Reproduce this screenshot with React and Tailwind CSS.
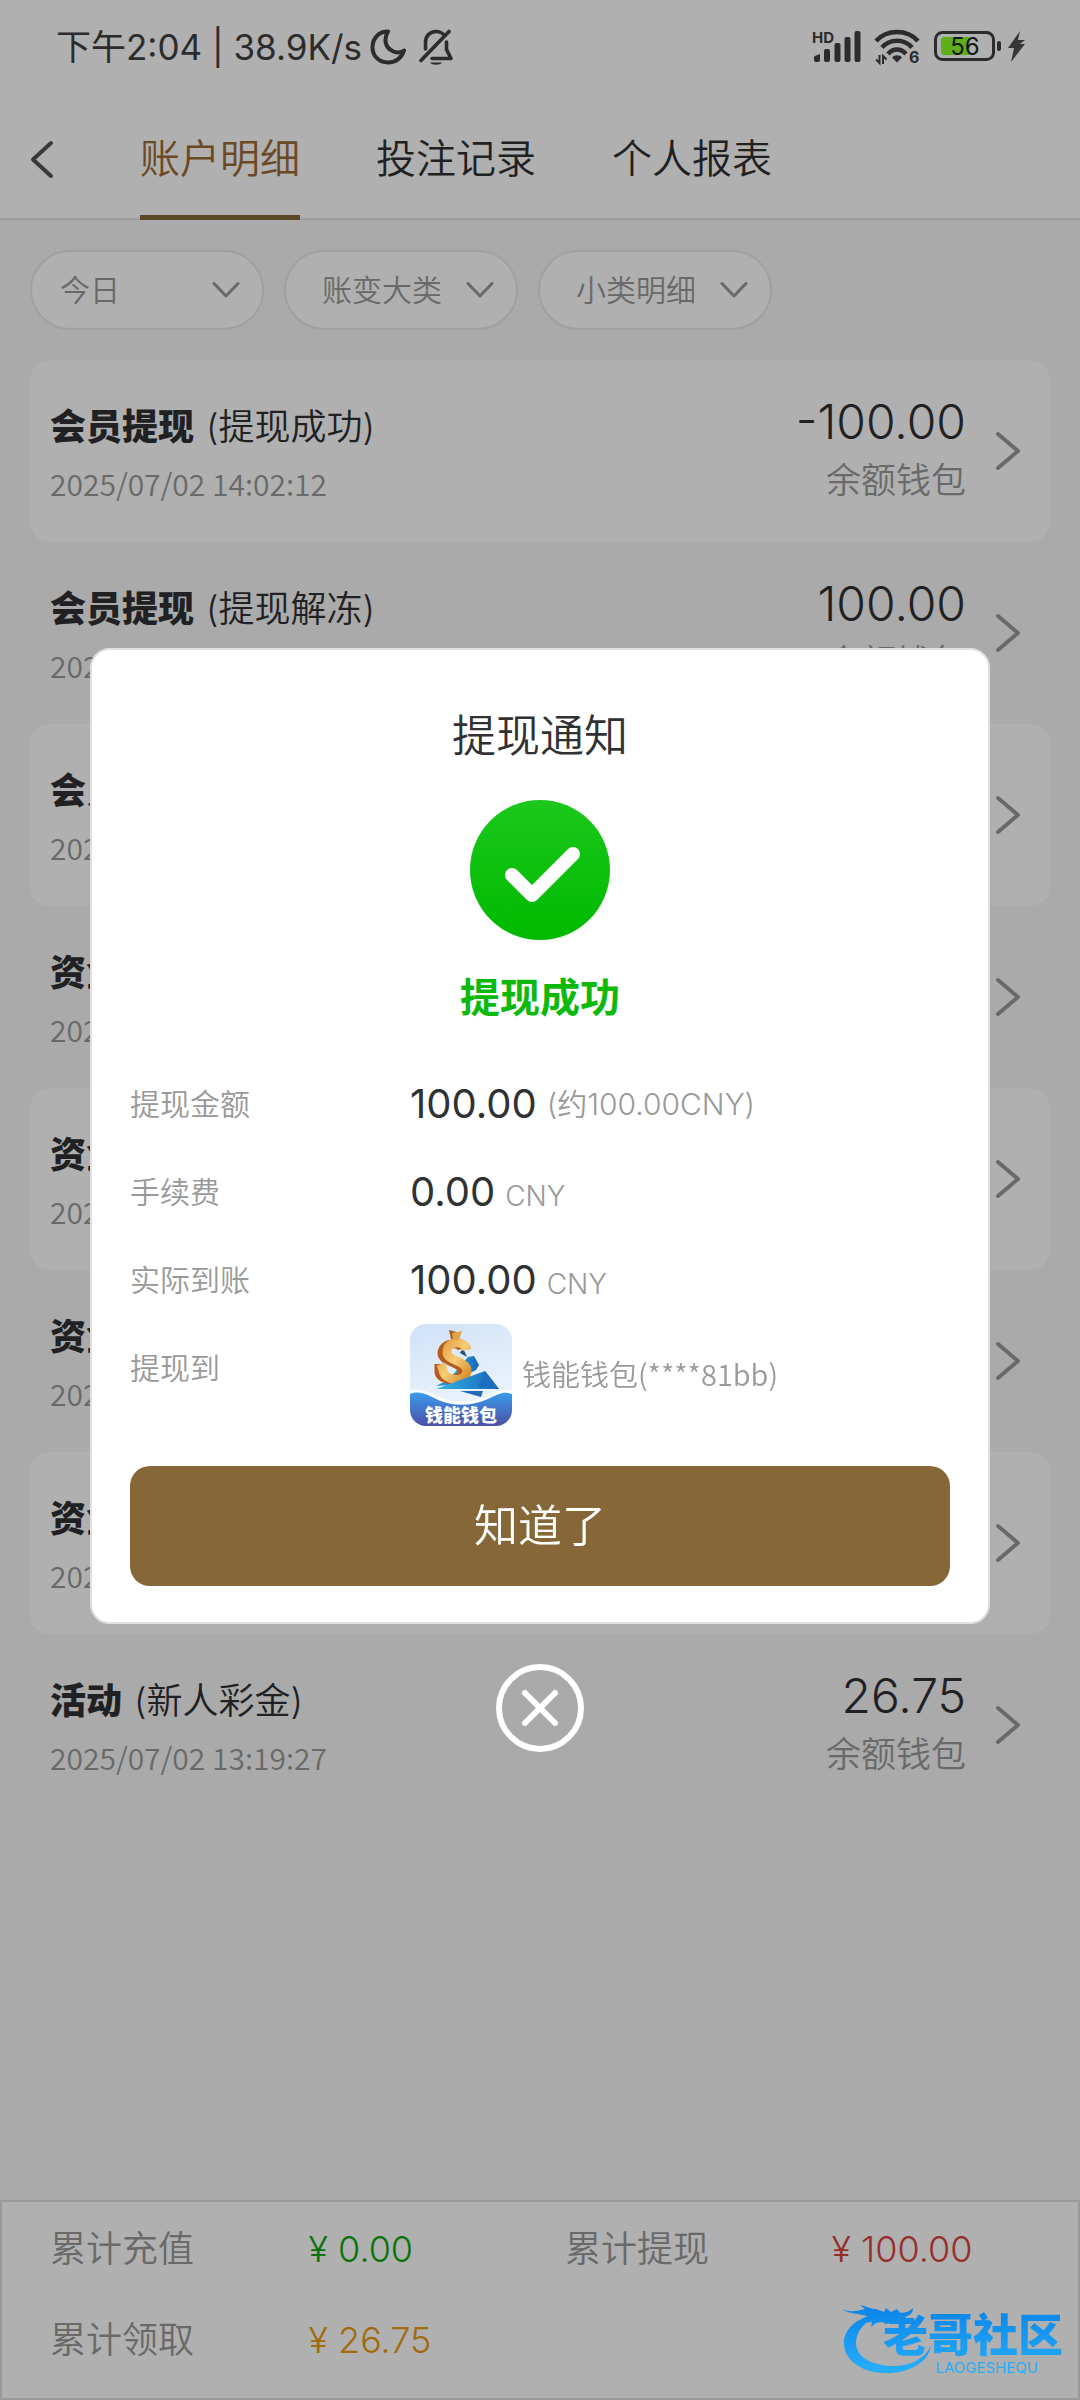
import React from "react";

const tabs = ["账户明细", "投注记录", "个人报表"];

const records = [
  { title: "会员提现", note: "(提现成功)", time: "2025/07/02 14:02:12", amount: "-100.00" },
  { title: "会员提现", note: "(提现解冻)", time: "2025/07/02 14:02:12", amount: "100.00" },
  { title: "会员提现", note: "(提现冻结)", time: "2025/07/02 13:58:40", amount: "-100.00" },
  { title: "资金转换", note: "(转入)", time: "2025/07/02 13:57:21", amount: "100.00" },
  { title: "资金转换", note: "(转出)", time: "2025/07/02 13:57:20", amount: "-100.00" },
  { title: "资金转换", note: "(转入)", time: "2025/07/02 13:20:11", amount: "26.75" },
  { title: "资金转换", note: "(转出)", time: "2025/07/02 13:20:10", amount: "-26.75" },
  { title: "活动", note: "(新人彩金)", time: "2025/07/02 13:19:27", amount: "26.75" },
];

function StatusBar() {
  return (
    <div className="flex h-[94px] items-center justify-between bg-white pl-14 pr-[50px] text-[#404040]">
      <div className="flex items-center">
        <span className="text-[35px] font-normal leading-[48px]">下午2:04 | 38.9K/s</span>
        <svg className="ml-2 h-9 w-9" viewBox="0 0 36 36" fill="none" stroke="currentColor" strokeWidth="4" strokeLinejoin="round" aria-hidden="true">
          <path d="M18 2.500C8 2.500 2.500 10 2.500 18.500C2.500 27 9 33.500 18 33.500C26 33.500 32 28.500 34 21.500C31 24 26 24 22.500 22C15 18.500 13.500 10 18 2.500Z" />
        </svg>
        <svg className="ml-3 h-9 w-9" viewBox="0 0 36 36" fill="none" stroke="currentColor" strokeWidth="3.6" strokeLinecap="round" strokeLinejoin="round" aria-hidden="true">
          <path d="M7.500 20V13.500C7.500 7 12 2.500 18 2.500C21.500 2.500 24.500 4 26.500 6.500" />
          <path d="M31 2.500L3 31.500" />
          <path d="M28.500 13V20.500L33 29.500H14" />
          <path d="M12 33.500H24C22 36.500 14 36.500 12 33.500Z" fill="currentColor" stroke="none" />
        </svg>
      </div>
      <div className="flex items-center">
        <svg className="h-9 w-[50px]" viewBox="0 0 50 36" fill="currentColor" aria-hidden="true">
          <text x="0" y="14" fontSize="15" fontWeight="700" fontFamily="Inter, sans-serif">HD</text>
          <path d="M2 28Q2 27 8 25V31Q8 33 6 33H4Q2 33 2 31Z" />
          <rect x="12" y="20" width="6" height="13" rx="2" />
          <rect x="22.500" y="14" width="6" height="19" rx="2" />
          <rect x="32.500" y="8" width="6" height="25" rx="2" />
          <rect x="42.500" y="2" width="6" height="31" rx="2" />
        </svg>
        <svg className="ml-3 h-9 w-12 overflow-visible" viewBox="0 0 48 36" fill="none" stroke="currentColor" strokeWidth="4.500" aria-hidden="true">
          <path d="M2 12C13 0 33 0 44 12" />
          <path d="M8 18.500C16 9.500 30 9.500 38 18.500" />
          <path d="M14 25C19 19 27 19 32 25" />
          <path d="M18 28.500C20.500 25.500 25.500 25.500 28 28.500L23 33.500Z" fill="currentColor" stroke="none" />
          <path d="M5.500 26V34L2 30.500M9 35V27L12.500 30.500" strokeWidth="2" />
          <text x="35" y="34" fontSize="16" fontWeight="700" fill="currentColor" stroke="none" fontFamily="Inter, sans-serif">6</text>
        </svg>
        <svg className="ml-3 h-9 w-24" viewBox="0 0 96 36" aria-hidden="true">
          <rect x="1.500" y="3.500" width="58" height="27" rx="7" fill="none" stroke="#404040" strokeWidth="3" />
          <path d="M10 8H36V26H10Q7 26 7 23V11Q7 8 10 8Z" fill="#88ff28" />
          <text x="31" y="26" textAnchor="middle" fontSize="24" fontWeight="400" fill="#222222" fontFamily="Inter, sans-serif">56</text>
          <rect x="63" y="12" width="4" height="10" rx="2" fill="#404040" />
          <path d="M86 2L74 19H80L77 33L91 15H86L91 11H84Z" fill="#505050" />
        </svg>
      </div>
    </div>
  );
}

function Header() {
  return (
    <header className="flex h-[126px] items-stretch border-b-2 border-[#e5e5e5] bg-white">
      <button type="button" aria-label="返回" className="flex w-[140px] items-center pl-[30px] pt-1.5">
        <svg className="h-10 w-6" viewBox="0 0 24 40" fill="none" stroke="#555555" strokeWidth="4" strokeLinecap="round" strokeLinejoin="round" aria-hidden="true">
          <path d="M21 4L3 20.500L21 37" />
        </svg>
      </button>
      <nav className="flex gap-[76px]">
        {tabs.map((tab, i) => (
          <a
            key={tab}
            href="#"
            className={
              i === 0
                ? "-mb-0.5 flex items-center border-b-[5px] border-[#866838] pt-2 text-[40px] leading-[60px] text-[#9b6a35]"
                : "flex items-center pt-1.5 text-[40px] leading-[60px] text-[#303133]"
            }
          >
            {tab}
          </a>
        ))}
      </nav>
    </header>
  );
}

function Filter({ label, indent }) {
  return (
    <div className="relative w-[234px]">
      <select
        aria-label={label}
        className={
          indent
            ? "h-20 w-full appearance-none rounded-full border-2 border-[#e8e8e8] bg-white pl-9 pr-14 text-[30px] leading-[44px] text-[#999999]"
            : "h-20 w-full appearance-none rounded-full border-2 border-[#e8e8e8] bg-white pl-7 pr-14 text-[30px] leading-[44px] text-[#999999]"
        }
      >
        <option>{label}</option>
      </select>
      <svg className="pointer-events-none absolute right-6 top-8 h-4 w-7" viewBox="0 0 28 16" fill="none" stroke="#999999" strokeWidth="3" strokeLinecap="round" strokeLinejoin="round" aria-hidden="true">
        <path d="M2 1.500L14 14L26 1.500" />
      </svg>
    </div>
  );
}

function RecordRow({ record }) {
  return (
    <li className="rounded-[20px] odd:bg-white">
      <button type="button" className="flex h-[182px] w-full items-center justify-between pl-5 pr-7 text-left">
        <span className="flex flex-col pt-1">
          <span className="flex gap-3 text-[36px] leading-[60px] text-[#303133]">
            <b className="font-black">{record.title}</b>
            <span>{record.note}</span>
          </span>
          <span className="text-[30px] leading-[52px] text-[#999999] font-['Noto_Sans_CJK_SC',sans-serif]">{record.time}</span>
        </span>
        <span className="flex items-center gap-7">
          <span className="flex flex-col pb-0.5 text-right">
            <span className="text-[48px] leading-[60px] text-[#303133]">{record.amount}</span>
            <span className="text-[35px] leading-[56px] text-[#999999]">余额钱包</span>
          </span>
          <svg className="h-10 w-7" viewBox="0 0 28 40" fill="none" stroke="#999999" strokeWidth="4" strokeLinecap="round" strokeLinejoin="round" aria-hidden="true">
            <path d="M4 3L24 20L4 37" />
          </svg>
        </span>
      </button>
    </li>
  );
}

function Summary() {
  return (
    <footer className="relative mt-auto h-[200px] border-2 border-[#e0e0e0] bg-white pl-12 pt-0.5">
      <dl className="grid grid-cols-[259fr_257fr_267fr_247fr] text-[36px] leading-[91px] text-[#999999]">
        <dt>累计充值</dt>
        <dd className="text-[#0ea80e]">¥ 0.00</dd>
        <dt>累计提现</dt>
        <dd className="text-[#d9453c]">¥ 100.00</dd>
        <dt>累计领取</dt>
        <dd className="text-[#e89c10]">¥ 26.75</dd>
      </dl>
    </footer>
  );
}

function CommunityMark() {
  return (
    <svg className="absolute bottom-5 right-3 h-20 w-[228px]" viewBox="0 0 228 80" role="img" aria-label="老哥社区">
      <defs>
        <linearGradient id="mark" gradientUnits="userSpaceOnUse" x1="0" y1="6" x2="0" y2="74">
          <stop offset="0" stopColor="#0a84e8" />
          <stop offset="1" stopColor="#27b0fb" />
        </linearGradient>
      </defs>
      <g fill="url(#mark)">
        <path d="M36 14C16 18 3 30 4 44C5 64 28 75 52 73C72 71 88 62 91 46C84 60 68 67 50 66C30 65 16 56 16 43C16 33 22 24 34 18Z" />
        <path d="M2 9C10 13 18 11 25 9L20 5C28 7 32 9 36 9L44 12L46 8L51 12L57 9L60 13C66 13 70 11 73 8C73 14 68 17 62 17L71 19C70 22 66 22 60 20L52 22L46 24L42 22L36 23L31 27L32 22L24 23L29 17C22 13 10 15 2 9Z" />
        <text x="43" y="52" fontSize="45" fontWeight="900" fontFamily="'Noto Sans CJK SC', sans-serif">老哥社区</text>
        <text x="96" y="73" fontSize="15" fontWeight="400" fontFamily="Inter, sans-serif">LAOGESHEQU</text>
      </g>
    </svg>
  );
}

function WalletLogo() {
  return (
    <svg className="h-[102px] w-[102px] shrink-0 rounded-2xl" viewBox="0 0 102 102" role="img" aria-label="钱能钱包">
      <defs>
        <linearGradient id="sky" x1="0" y1="0" x2="0.3" y2="1">
          <stop offset="0" stopColor="#cfe2f8" />
          <stop offset="1" stopColor="#f0f6fd" />
        </linearGradient>
        <linearGradient id="wave" x1="0" y1="0" x2="0" y2="1">
          <stop offset="0" stopColor="#399bec" />
          <stop offset="1" stopColor="#4c50a6" />
        </linearGradient>
        <linearGradient id="gold" x1="0" y1="0" x2="1" y2="1">
          <stop offset="0" stopColor="#e39a3c" />
          <stop offset="0.5" stopColor="#f7cd78" />
          <stop offset="1" stopColor="#d58b2c" />
        </linearGradient>
        <linearGradient id="plane" x1="0" y1="0" x2="1" y2="0">
          <stop offset="0" stopColor="#35b4e6" />
          <stop offset="1" stopColor="#1765b8" />
        </linearGradient>
      </defs>
      <rect width="102" height="102" fill="url(#sky)" />
      <path d="M58 33L64 32L69 41L66 46L56 51L40 54Z" fill="url(#plane)" />
      <path d="M26 62L40 55L54 50L54 60Z" fill="#2b8fd3" />
      <path d="M53 24L57 33L50 29Z" fill="#1e4f86" />
      <g fill="none" strokeLinecap="butt">
        <path d="M52 25C50 17 33 18 32 29C32 39 52 37 52 47C52 58 31 58 29 48V40" stroke="#b45a1c" strokeWidth="9" />
        <path d="M57 26C55 16 37 16 37 28C37 38 57 36 57 47C56 59 35 58 33 46L31 40" stroke="url(#gold)" strokeWidth="9" />
      </g>
      <path d="M39 6L50 9L49 15L41 15Z" fill="#a85b1c" />
      <path d="M42 9L52 7L49 16L43 16Z" fill="#e2a34a" />
      <path d="M26 65L75 47L89 65Z" fill="url(#plane)" />
      <path d="M75 47L89 65L68 63Z" fill="#1c6fc0" />
      <path d="M50 67L73 67L71 73Z" fill="#2469b4" />
      <path d="M0 67C10 63 18 68 28 73C44 80 62 79 78 72C88 67 94 64 102 67V102H0Z" fill="#ffffff" opacity="0.8" />
      <path d="M0 70C10 66 18 71 28 76C44 83 62 82 78 75C88 70 94 67 102 70V102H0Z" fill="url(#wave)" />
      <text x="51" y="98" textAnchor="middle" fontSize="18" fontWeight="900" fill="#ffffff" fontFamily="'Noto Sans CJK SC', sans-serif">钱能钱包</text>
    </svg>
  );
}

function DetailRow({ label, children }) {
  return (
    <div className="flex">
      <dt className="w-[280px] text-[30px] leading-[88px]">{label}</dt>
      <dd className="flex-1">{children}</dd>
    </div>
  );
}

function Notice() {
  return (
    <div className="fixed inset-0 flex flex-col items-center justify-center bg-black/31">
      <section role="dialog" aria-modal="true" aria-labelledby="notice-title" className="flex w-5/6 flex-col items-center rounded-[20px] border-2 border-[#e0e0e0] bg-white px-[38px] pb-9 pt-[53px]">
        <h2 id="notice-title" className="text-[44px] leading-[66px] text-[#303133]">提现通知</h2>
        <svg className="mt-[31px] h-[140px] w-[140px]" viewBox="0 0 140 140" aria-hidden="true">
          <defs>
            <linearGradient id="ok" x1="0" y1="0" x2="0" y2="1">
              <stop offset="0" stopColor="#1bc81b" />
              <stop offset="1" stopColor="#00b900" />
            </linearGradient>
          </defs>
          <circle cx="70" cy="70" r="70" fill="url(#ok)" />
          <path d="M42 75L62 95L103 54" fill="none" stroke="#ffffff" strokeWidth="14" strokeLinecap="round" strokeLinejoin="round" />
        </svg>
        <p className="mt-7 text-[40px] font-bold leading-[60px] text-[#0cb90c]">提现成功</p>
        <dl className="mt-8 w-full text-[#999999]">
          <DetailRow label="提现金额">
            <div className="flex h-[88px] items-center gap-2.5 leading-[88px]">
              <span className="text-[40px] font-normal text-[#303133]">100.00</span>
              <span className="text-[30px]">(约100.00CNY)</span>
            </div>
          </DetailRow>
          <DetailRow label="手续费">
            <div className="flex h-[88px] items-baseline gap-2.5 leading-[88px]">
              <span className="text-[40px] font-normal text-[#303133]">0.00</span>
              <span className="text-[28px]">CNY</span>
            </div>
          </DetailRow>
          <DetailRow label="实际到账">
            <div className="flex h-[88px] items-baseline gap-2.5 leading-[88px]">
              <span className="text-[40px] font-normal text-[#303133]">100.00</span>
              <span className="text-[28px]">CNY</span>
            </div>
          </DetailRow>
          <DetailRow label="提现到">
            <div className="flex items-center gap-2.5">
              <WalletLogo />
              <span className="pb-1 text-[29px] leading-[44px] font-['Noto_Sans_CJK_SC',sans-serif]">钱能钱包(****81bb)</span>
            </div>
          </DetailRow>
        </dl>
        <button type="button" className="mt-10 h-[120px] w-full rounded-[20px] bg-[#866838] text-[44px] leading-[66px] text-white">知道了</button>
      </section>
      <button type="button" aria-label="关闭" className="mt-10 h-[88px] w-[88px] rounded-full">
        <svg className="h-full w-full" viewBox="0 0 88 88" fill="none" stroke="#ffffff" strokeWidth="6" strokeLinecap="round" aria-hidden="true">
          <circle cx="44" cy="44" r="41" />
          <path d="M29 29L59 59M59 29L29 59" />
        </svg>
      </button>
    </div>
  );
}

export default function App() {
  return (
    <div className="flex min-h-screen flex-col bg-[#f7f7f7] font-['Inter','Noto_Sans_CJK_SC',sans-serif] font-[350]">
      <StatusBar />
      <Header />
      <main>
        <div className="flex gap-5 px-[30px] pb-[30px] pt-[30px]">
          <Filter label="今日" />
          <Filter label="账变大类" indent />
          <Filter label="小类明细" indent />
        </div>
        <ul className="px-[30px]">
          {records.map((record, i) => (
            <RecordRow key={i} record={record} />
          ))}
        </ul>
      </main>
      <Summary />
      <Notice />
      <CommunityMark />
    </div>
  );
}
